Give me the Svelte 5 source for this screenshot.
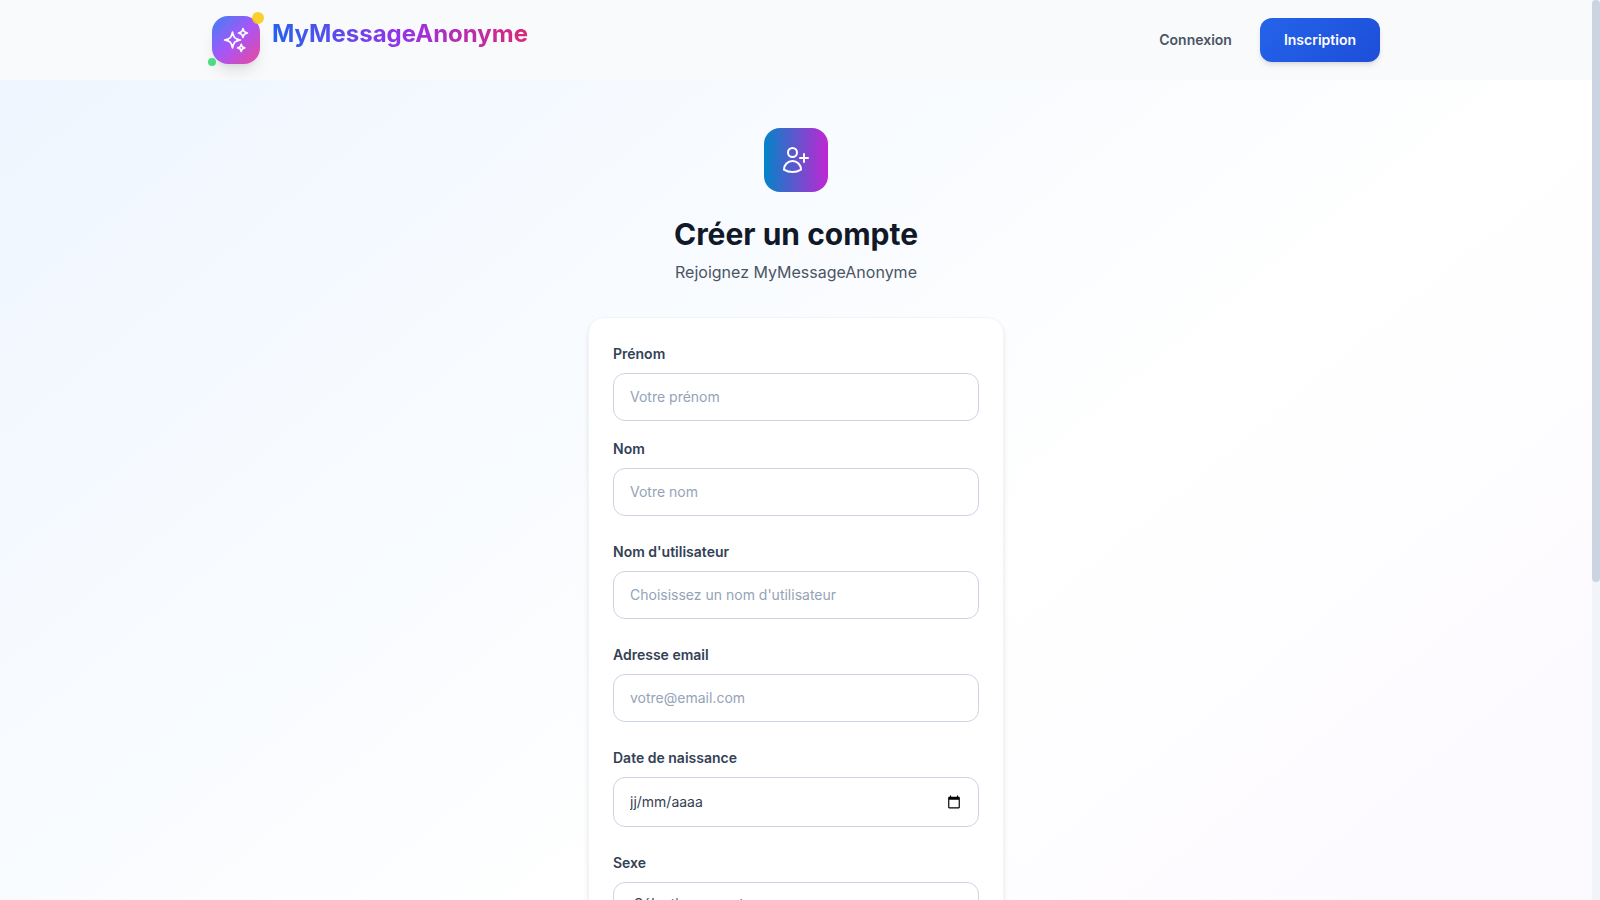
<script lang="ts">
	type Field = { id: string; label: string; type: string; placeholder?: string };

	const nameFields: Field[] = [
		{ id: 'firstName', label: 'Prénom', type: 'text', placeholder: 'Votre prénom' },
		{ id: 'lastName', label: 'Nom', type: 'text', placeholder: 'Votre nom' },
	];

	const accountFields: Field[] = [
		{ id: 'username', label: "Nom d'utilisateur", type: 'text', placeholder: "Choisissez un nom d'utilisateur" },
		{ id: 'email', label: 'Adresse email', type: 'email', placeholder: 'votre@email.com' },
	];

	let birthDate = $state('');
	let dateFocused = $state(false);
	let gender = $state('');
	let dateInput: HTMLInputElement;

	let viewport = $state(0);
	let scrollTop = $state(0);
	let pageHeight = $state(0);

	const ratio = $derived(pageHeight ? Math.min(1, viewport / pageHeight) : 1);
	const thumbStyle = $derived(
		`height: ${Math.round(viewport * ratio)}px; margin-top: ${Math.round(scrollTop * ratio)}px;`
	);

	function openPicker() {
		dateFocused = true;
		dateInput.focus();
		dateInput.showPicker?.();
	}
</script>

<svelte:window bind:innerHeight={viewport} bind:scrollY={scrollTop} />

{#snippet field(f: Field)}
	<div class="field">
		<label for={f.id}>{f.label}</label>
		<input id={f.id} name={f.id} type={f.type} placeholder={f.placeholder} />
	</div>
{/snippet}

<div class="page" bind:clientHeight={pageHeight}>
	<header class="header">
		<div class="header__inner">
			<a class="brand" href="/">
				<span class="brand__logo">
					<svg viewBox="0 0 24 24" aria-hidden="true">
						<path d="M9.813 15.904 9 18.75l-.813-2.846a4.5 4.5 0 0 0-3.09-3.09L2.25 12l2.846-.813a4.5 4.5 0 0 0 3.09-3.09L9 5.25l.813 2.846a4.5 4.5 0 0 0 3.09 3.09L15.75 12l-2.846.813a4.5 4.5 0 0 0-3.09 3.09ZM18.259 8.715 18 9.75l-.259-1.035a3.375 3.375 0 0 0-2.455-2.456L14.25 6l1.036-.259a3.375 3.375 0 0 0 2.455-2.456L18 2.25l.259 1.035a3.375 3.375 0 0 0 2.456 2.456L21.75 6l-1.035.259a3.375 3.375 0 0 0-2.456 2.456ZM16.894 20.567 16.5 21.75l-.394-1.183a2.25 2.25 0 0 0-1.423-1.423L13.5 18.75l1.183-.394a2.25 2.25 0 0 0 1.423-1.423l.394-1.183.394 1.183a2.25 2.25 0 0 0 1.423 1.423l1.183.394-1.183.394a2.25 2.25 0 0 0-1.423 1.423Z" />
					</svg>
					<span class="brand__dot brand__dot--yellow"></span>
					<span class="brand__dot brand__dot--green"></span>
				</span>
				<span class="brand__name">MyMessageAnonyme</span>
			</a>
			<nav class="nav">
				<a class="nav__link" href="/login">Connexion</a>
				<a class="nav__cta" href="/register">Inscription</a>
			</nav>
		</div>
	</header>

	<main class="main">
		<div class="signup">
			<div class="signup__icon">
				<svg viewBox="0 0 24 24" aria-hidden="true">
					<path d="M18 7.5v3m0 0v3m0-3h3m-3 0h-3m-2.25-4.125a3.375 3.375 0 1 1-6.75 0 3.375 3.375 0 0 1 6.75 0ZM3 19.235v-.11a6.375 6.375 0 0 1 12.75 0v.109A12.318 12.318 0 0 1 9.374 21c-2.331 0-4.512-.645-6.374-1.766Z" />
				</svg>
			</div>
			<h1>Créer un compte</h1>
			<p class="signup__lead">Rejoignez MyMessageAnonyme</p>

			<form class="card">
				<div class="names">
					{#each nameFields as f (f.id)}
						{@render field(f)}
					{/each}
				</div>

				{#each accountFields as f (f.id)}
					{@render field(f)}
				{/each}

				<div class="field">
					<label for="birthDate">Date de naissance</label>
					<div class="date">
						<input
							id="birthDate"
							name="birthDate"
							type={dateFocused || birthDate ? 'date' : 'text'}
							placeholder="jj/mm/aaaa"
							bind:this={dateInput}
							bind:value={birthDate}
							onfocus={() => (dateFocused = true)}
							onblur={() => (dateFocused = false)}
						/>
						<button type="button" aria-label="Ouvrir le calendrier" onclick={openPicker}>
							<svg viewBox="0 0 24 24" aria-hidden="true">
								<path d="M20 3h-1V1h-2v2H7V1H5v2H4c-1.1 0-2 .9-2 2v16c0 1.1.9 2 2 2h16c1.1 0 2-.9 2-2V5c0-1.1-.9-2-2-2zm0 18H4V8h16v13z" />
							</svg>
						</button>
					</div>
				</div>

				<div class="field">
					<label for="gender">Sexe</label>
					<select id="gender" name="gender" bind:value={gender}>
						<option value="">Sélectionnez votre sexe</option>
						<option value="f">Femme</option>
						<option value="m">Homme</option>
					</select>
				</div>
			</form>
		</div>
	</main>
</div>

<div class="scrollbar" aria-hidden="true">
	<div class="scrollbar__thumb" style={thumbStyle}></div>
</div>

<style>
	:global(html) {
		scrollbar-width: none;
	}
	:global(body) {
		margin: 0;
		background: #f8fafc;
	}

	.page {
		margin-right: 8px;
		font-family: Inter, sans-serif;
		font-size: 16px;
		color: #1e293b;
	}
	.page * {
		box-sizing: border-box;
	}
	a {
		text-decoration: none;
	}
	svg {
		display: block;
		fill: none;
		stroke: currentColor;
		stroke-width: 1.5;
		stroke-linecap: round;
		stroke-linejoin: round;
	}

	.scrollbar {
		position: fixed;
		top: 0;
		right: 0;
		bottom: 0;
		width: 8px;
		background: #f1f5f9;
	}
	.scrollbar__thumb {
		border-radius: 4px;
		background: #cbd5e1;
	}

	.header {
		background: #f8fafc;
	}
	.header__inner {
		display: flex;
		align-items: center;
		justify-content: space-between;
		max-width: 1200px;
		min-height: 80px;
		margin: 0 auto;
		padding: 0 16px;
	}

	.brand {
		display: flex;
		align-items: flex-start;
		gap: 12px;
	}
	.brand__logo {
		position: relative;
		display: grid;
		place-items: center;
		width: 48px;
		height: 48px;
		border-radius: 16px;
		color: #fff;
		background: linear-gradient(to bottom right, #3b82f6, #a855f7, #ec4899);
		box-shadow: 0 10px 15px -3px rgb(0 0 0 / 0.1), 0 4px 6px -4px rgb(0 0 0 / 0.1);
	}
	.brand__logo svg {
		width: 28px;
		height: 28px;
	}
	.brand__dot {
		position: absolute;
		border-radius: 50%;
	}
	.brand__dot--yellow {
		top: -4px;
		right: -4px;
		width: 12px;
		height: 12px;
		background: #facc15;
		opacity: 0.9;
	}
	.brand__dot--green {
		bottom: -2px;
		left: -4px;
		width: 8px;
		height: 8px;
		background: #4ade80;
	}
	.brand__name {
		font-size: 24px;
		font-weight: 700;
		line-height: 36px;
		color: transparent;
		background: linear-gradient(to right, #2563eb, #9333ea, #db2777);
		background-clip: text;
	}

	.nav {
		display: flex;
		align-items: center;
		gap: 12px;
		font-size: 14px;
		font-weight: 600;
		line-height: 20px;
	}
	.nav__link {
		padding: 12px 16px;
		color: #4b5563;
	}
	.nav__cta {
		padding: 12px 24px;
		border-radius: 12px;
		color: #fff;
		background: linear-gradient(135deg, #2563eb, #1d4ed8);
		box-shadow: 0 4px 6px -1px rgb(0 0 0 / 0.1), 0 2px 4px -2px rgb(0 0 0 / 0.1);
	}

	.main {
		min-height: 1312px;
		padding: 48px 16px;
		background: linear-gradient(to bottom right, #eff6ff, #fff, #faf5ff);
	}
	.signup {
		max-width: 416px;
		margin: 0 auto;
		text-align: center;
	}
	.signup__icon {
		display: grid;
		place-items: center;
		width: 64px;
		height: 64px;
		margin: 0 auto 24px;
		border-radius: 16px;
		color: #fff;
		background: linear-gradient(to right, #0284c7, #c026d3);
	}
	.signup__icon svg {
		width: 32px;
		height: 32px;
	}
	h1 {
		margin: 0 0 8px;
		font-size: 30px;
		font-weight: 700;
		line-height: 36px;
		color: #111827;
	}
	.signup__lead {
		margin: 0 0 32px;
		line-height: 25px;
		color: #4b5563;
	}

	.card {
		display: flex;
		flex-direction: column;
		gap: 24px;
		padding: 24px;
		border: 1px solid #f3f4f6;
		border-radius: 16px;
		text-align: left;
		background: #fff;
		box-shadow: 0 4px 6px -1px rgb(0 0 0 / 0.1), 0 2px 4px -2px rgb(0 0 0 / 0.1);
	}
	.names {
		display: flex;
		flex-direction: column;
		gap: 16px;
	}
	.field label {
		display: block;
		margin-bottom: 8px;
		font-size: 14px;
		font-weight: 600;
		line-height: 23px;
		color: #334155;
	}
	input,
	select {
		display: block;
		width: 100%;
		height: 48px;
		padding: 0 16px 2px;
		border: 1px solid #cbd5e1;
		border-radius: 12px;
		font-family: inherit;
		font-size: 14px;
		color: #374151;
		background: #fff;
		outline: none;
	}
	input::placeholder {
		color: #94a3b8;
		opacity: 1;
	}
	input:focus,
	select:focus {
		border-color: #2563eb;
	}
	select {
		height: 46px;
		padding-bottom: 4px;
	}

	.date {
		position: relative;
	}
	.date input {
		height: 50px;
	}
	.date input::placeholder {
		color: #374151;
	}
	.date input::-webkit-calendar-picker-indicator {
		opacity: 0;
	}
	.date button {
		position: absolute;
		top: 0;
		right: 16px;
		bottom: 0;
		padding: 0 2px;
		border: 0;
		color: #000;
		background: none;
		cursor: pointer;
	}
	.date svg {
		width: 14px;
		height: 14px;
		fill: currentColor;
		stroke: none;
	}
</style>
